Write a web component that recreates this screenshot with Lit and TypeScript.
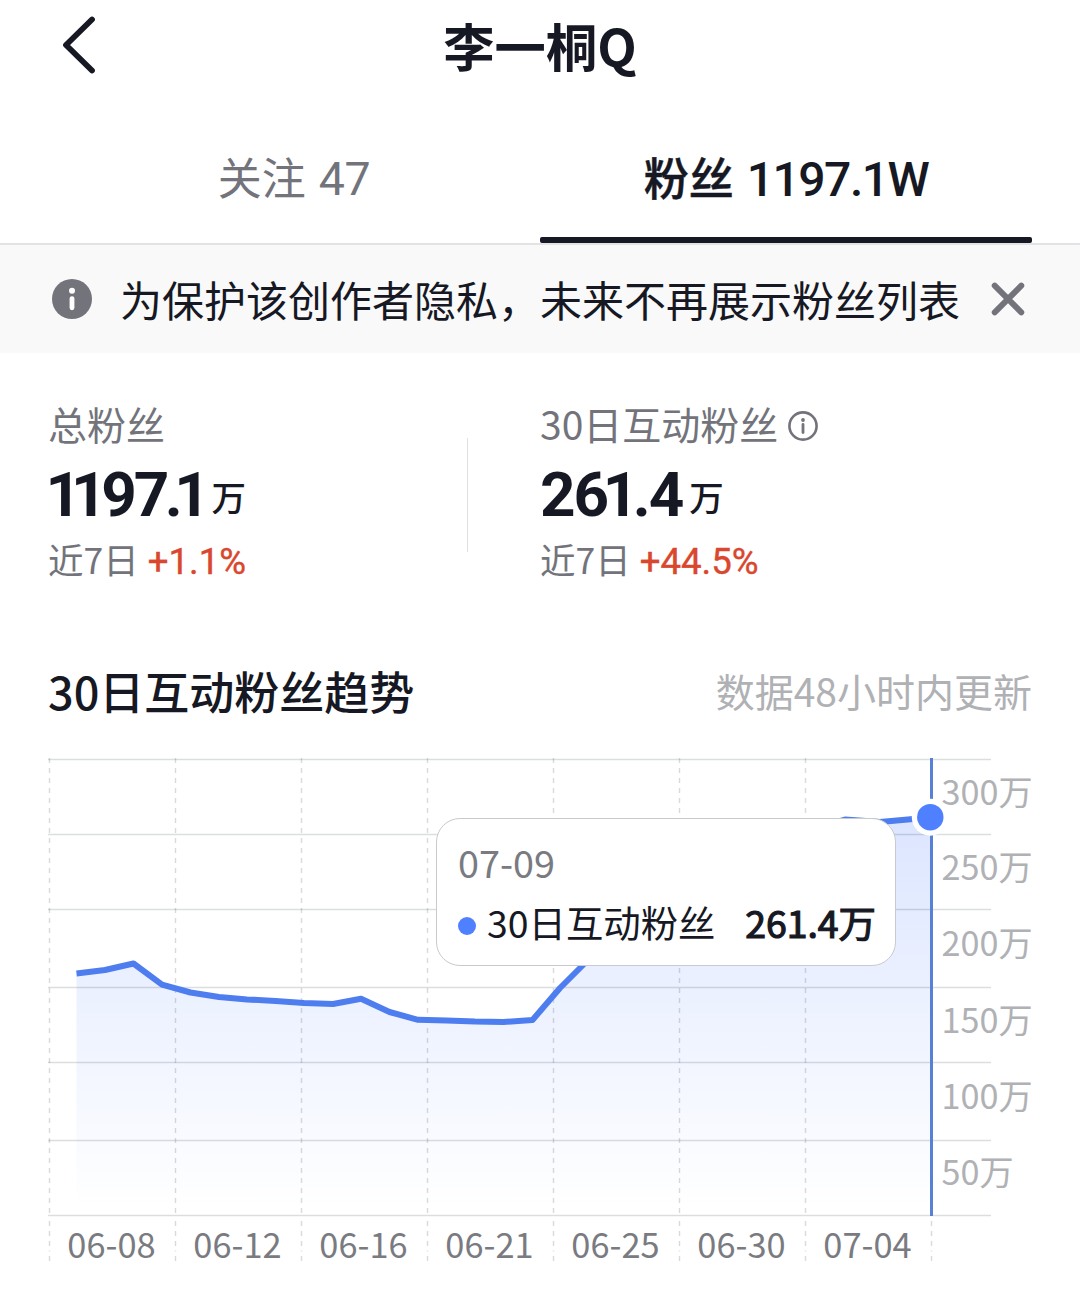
import { LitElement, html, svg, css } from "lit";
import { customElement, property } from "lit/decorators.js";
import { classMap } from "lit/directives/class-map.js";
import { styleMap } from "lit/directives/style-map.js";

interface Stat {
  label: string;
  value: string;
  delta: string;
  info: boolean;
}

const STATS: Stat[] = [
  { label: "总粉丝", value: "1197.1", delta: "+1.1%", info: false },
  { label: "30日互动粉丝", value: "261.4", delta: "+44.5%", info: true },
];

// Proportional spacing after a digit, since the font's figures are tabular.
const spacingAfter = (c: string, next?: string) => {
  let s = next === undefined ? 0 : -2;
  if (c === "1") s -= 3.5;
  if (next === "1") s -= 4.5;
  if (c === "7" && next === ".") s -= 2.5;
  if (c === "." && next === "1") s -= 2;
  if (c === "9") s -= 1;
  return s;
};

const figures = (text: string) =>
  [...text].map(
    (c, i, all) =>
      html`<span
        class=${classMap({ digit: true, lead: i === 0 && c === "1" })}
        style=${styleMap({ letterSpacing: `${spacingAfter(c, all[i + 1])}px` })}
        >${c}</span
      >`,
  );

@customElement("fans-header")
export class FansHeader extends LitElement {
  static styles = css`
    :host {
      display: block;
    }
    .bar {
      display: grid;
      grid-template-columns: 48px 1fr 48px;
      align-items: center;
      height: 90px;
      padding: 0 48px;
    }
    .back {
      display: block;
      width: 64px;
      height: 64px;
    }
    .title {
      margin: 0 0 1px;
      text-align: center;
      font-size: 51.3px;
      line-height: 72px;
      font-weight: 700;
    }
    .tabs {
      display: grid;
      grid-template-columns: 1fr 1fr;
      height: 153px;
      padding: 0 48px;
      border-bottom: 2px solid #e3e3e5;
    }
    .tab {
      display: flex;
      flex-direction: column;
      align-items: center;
      padding-top: 50px;
    }
    .tab-text {
      display: flex;
      align-items: baseline;
      gap: 13px;
      height: 97px;
      line-height: 73px;
      font-size: 44px;
      color: #73747b;
    }
    .num {
      font-family: "Roboto", "Noto Sans CJK SC", sans-serif;
      font-size: 46.5px;
      letter-spacing: -0.5px;
    }
    .active .tab-text {
      color: #161823;
      font-size: 45px;
      font-weight: 500;
    }
    .active .name {
      -webkit-text-stroke: 0.5px #161823;
    }
    .active .num {
      font-size: 48px;
      font-weight: 500;
      letter-spacing: -1.5px;
    }
    .active .line {
      align-self: stretch;
      height: 6px;
      border-radius: 2px;
      background: #161823;
    }
  `;

  render() {
    return html`
      <header class="bar">
        <svg class="back" viewBox="0 0 64 64" fill="none">
          <path d="M44 6.5 L18 32 L44 57.5" stroke="#161823" stroke-width="5.8" stroke-linecap="round" stroke-linejoin="round" />
        </svg>
        <h1 class="title">李一桐Q</h1>
      </header>
      <nav class="tabs">
        <div class="tab">
          <div class="tab-text"><span class="name">关注</span><span class="num">47</span></div>
        </div>
        <div class="tab active">
          <div class="tab-text"><span class="name">粉丝</span><span class="num">1197.1W</span></div>
          <div class="line"></div>
        </div>
      </nav>
    `;
  }
}

@customElement("privacy-banner")
export class PrivacyBanner extends LitElement {
  static styles = css`
    :host {
      display: block;
    }
    .banner {
      display: flex;
      align-items: center;
      height: 108px;
      padding: 0 52px;
      background: #f9f9f9;
    }
    .info {
      width: 40px;
      height: 40px;
      flex: none;
    }
    .text {
      flex: 1;
      margin-left: 28px;
      font-size: 42px;
      line-height: 60px;
      white-space: nowrap;
    }
    .close {
      width: 40px;
      height: 40px;
      flex: none;
    }
  `;

  render() {
    return html`
      <div class="banner">
        <svg class="info" viewBox="0 0 40 40">
          <circle cx="20" cy="20" r="20" fill="#73747b" />
          <circle cx="20" cy="11.8" r="3" fill="#fff" />
          <rect x="17.6" y="17.2" width="4.8" height="14" rx="2.4" fill="#fff" />
        </svg>
        <span class="text">为保护该创作者隐私，未来不再展示粉丝列表</span>
        <svg class="close" viewBox="0 0 40 40" fill="none">
          <path d="M6.7 6.7 L33.3 33.3 M33.3 6.7 L6.7 33.3" stroke="#73747b" stroke-width="5.9" stroke-linecap="round" />
        </svg>
      </div>
    `;
  }
}

@customElement("fans-stat")
export class FansStat extends LitElement {
  static styles = css`
    :host {
      display: block;
    }
    .label {
      display: flex;
      align-items: center;
      gap: 9px;
      height: 60px;
      font-size: 39px;
      line-height: 60px;
      color: #73747b;
    }
    .icon {
      width: 32px;
      height: 32px;
      margin-top: 6px;
    }
    .value {
      display: flex;
      gap: 5px;
      height: 80px;
      line-height: 84px;
    }
    .num {
      display: flex;
      font-family: "Roboto", "Noto Sans CJK SC", sans-serif;
      font-size: 62px;
      font-weight: 700;
    }
    .lead {
      margin-left: -2.5px;
    }
    .unit {
      font-size: 34.5px;
      font-weight: 500;
      line-height: 87px;
    }
    .trend {
      display: flex;
      align-items: baseline;
      gap: 9px;
      height: 52px;
      font-size: 35.5px;
      line-height: 52px;
      color: #73747b;
    }
    .delta {
      font-family: "Roboto", "Noto Sans CJK SC", sans-serif;
      font-size: 36.6px;
      color: #d9472f;
      -webkit-text-stroke: 0.4px #d9472f;
    }
  `;

  @property({ attribute: false }) stat!: Stat;

  render() {
    const s = this.stat;
    return html`
      <div class="label">
        <span>${s.label}</span>
        ${s.info
          ? html`<svg class="icon" viewBox="0 0 32 32" fill="none">
              <circle cx="16" cy="16" r="13.6" stroke="#73747b" stroke-width="2.6" />
              <circle cx="16" cy="10" r="1.9" fill="#73747b" />
              <path d="M16 14.4 V22.6" stroke="#73747b" stroke-width="2.8" stroke-linecap="round" />
            </svg>`
          : null}
      </div>
      <div class="value"><span class="num">${figures(s.value)}</span><span class="unit">万</span></div>
      <div class="trend"><span>近7日</span><span class="delta">${s.delta}</span></div>
    `;
  }
}

const TOP = 758;
const GRID_Y = [759.5, 834.5, 909.5, 987.5, 1062.5, 1140.5, 1215.5];
const GRID_X = [49.5, 175.5, 301.5, 427.5, 553.5, 679.5, 805.5, 931.5];
const DATES = ["06-08", "06-12", "06-16", "06-21", "06-25", "06-30", "07-04"];
const AXIS: [string, number][] = [
  ["300万", 804.5],
  ["250万", 880],
  ["200万", 955.5],
  ["150万", 1032.5],
  ["100万", 1108.5],
  ["50万", 1184.5],
];
const POINTS: [number, number][] = [
  [76.5, 973.5], [105, 970], [133.5, 963.5], [162, 984.7], [190.5, 992.5],
  [219, 997], [247, 999.4], [275.5, 1000.9], [304, 1003], [333, 1004],
  [361, 998.7], [389.5, 1012], [418, 1019.8], [446.5, 1020.4], [475, 1021.6],
  [503.5, 1022], [532.5, 1020], [560, 988], [588, 960], [617, 934],
  [645, 910], [674, 888], [702, 868], [731, 851], [759, 842],
  [788, 836], [816, 828], [845, 819.6], [880, 822], [930, 817.5],
];

@customElement("trend-chart")
export class TrendChart extends LitElement {
  static styles = css`
    :host {
      display: block;
      position: relative;
    }
    .plot {
      display: block;
      width: 1080px;
      height: 558px;
    }
    .grid {
      stroke: #161823;
      stroke-opacity: 0.15;
      stroke-width: 1.4;
    }
    .dash {
      stroke: #161823;
      stroke-opacity: 0.16;
      stroke-width: 1.4;
      stroke-dasharray: 5 5;
    }
    .dash.foot {
      stroke-dasharray: 5 5 5 5 5 4.5 1 4.5 5 9;
    }
    .line {
      fill: none;
      stroke: #4e7df0;
      stroke-width: 6;
      stroke-linejoin: round;
    }
    .axis {
      font-size: 34.2px;
      fill: #b0b1b5;
    }
    .date {
      font-size: 34.4px;
      fill: #7a7b81;
      text-anchor: middle;
    }
    .tip {
      position: absolute;
      left: 436px;
      top: 60px;
      box-sizing: border-box;
      width: 460px;
      height: 148px;
      padding: 13px 19px 0 21px;
      border: 1.5px solid #c9cacd;
      border-radius: 24px;
      background: #fff;
    }
    .tip-date {
      font-size: 37.8px;
      line-height: 60px;
      color: #7a7b81;
    }
    .tip-row {
      display: flex;
      align-items: center;
      line-height: 61px;
      font-size: 37.4px;
      white-space: nowrap;
    }
    .dot {
      width: 18px;
      height: 18px;
      margin: 7px 11px 0 0;
      border-radius: 50%;
      background: #4f80ff;
    }
    .tip-value {
      margin-left: auto;
      -webkit-text-stroke: 1.2px #161823;
    }
  `;

  render() {
    const path = POINTS.map(([x, y]) => `${x} ${y - TOP}`).join(" L");
    return html`
      <svg class="plot" viewBox="0 0 1080 558">
        <defs>
          <linearGradient id="fade" x1="0" y1="60" x2="0" y2="450" gradientUnits="userSpaceOnUse">
            <stop offset="0" stop-color="#4f80ff" stop-opacity="0.2" />
            <stop offset="1" stop-color="#4f80ff" stop-opacity="0" />
          </linearGradient>
        </defs>
        <path d="M${path} L930 457 L76.5 457 Z" fill="url(#fade)" />
        ${GRID_Y.map((y) => svg`<line class="grid" x1="48" x2="991" y1=${y - TOP} y2=${y - TOP} />`)}
        ${GRID_X.map(
          (x) => svg`
            <line class="dash" x1=${x} x2=${x} y1="0" y2="457" />
            <line class="dash foot" x1=${x} x2=${x} y1="463" y2="503" />`,
        )}
        <path class="line" d="M${path}" />
        <line x1="931.5" x2="931.5" y1="0" y2="458" stroke="#5880d6" stroke-width="3" />
        <circle cx="930.3" cy="59.2" r="18.5" fill="#fff" />
        <circle cx="930.3" cy="59.2" r="13.2" fill="#4f80ff" />
        ${AXIS.map(([t, y]) => svg`<text class="axis" x="941.6" y=${y - TOP}>${t}</text>`)}
        ${DATES.map((t, i) => svg`<text class="date" x=${111.5 + i * 126} y="500">${t}</text>`)}
      </svg>
      <div class="tip">
        <div class="tip-date">07-09</div>
        <div class="tip-row">
          <span class="dot"></span>
          <span>30日互动粉丝</span>
          <span class="tip-value">261.4万</span>
        </div>
      </div>
    `;
  }
}

@customElement("app-root")
export class AppRoot extends LitElement {
  static styles = css`
    :host {
      display: block;
      width: 1080px;
      height: 1316px;
      overflow: hidden;
      background: #fff;
      color: #161823;
      font-family: "Noto Sans CJK SC", "Liberation Sans", sans-serif;
    }
    .stats {
      display: grid;
      grid-template-columns: 419px 1px 1fr;
      height: 262px;
      padding: 40px 48px 0;
      box-sizing: border-box;
    }
    .divider {
      width: 1px;
      height: 114px;
      margin-top: 45px;
      background: #dfdfe1;
    }
    .second {
      padding-left: 72px;
    }
    .heading {
      display: flex;
      justify-content: space-between;
      align-items: flex-start;
      height: 143px;
      padding: 45px 48px 0;
      box-sizing: border-box;
    }
    .name {
      margin: 0;
      font-size: 45px;
      line-height: 61px;
      font-weight: 500;
    }
    .note {
      font-size: 39px;
      line-height: 60px;
      color: #b0b1b5;
    }
  `;

  render() {
    return html`
      <fans-header></fans-header>
      <privacy-banner></privacy-banner>
      <section class="stats">
        <fans-stat .stat=${STATS[0]}></fans-stat>
        <div class="divider"></div>
        <fans-stat class="second" .stat=${STATS[1]}></fans-stat>
      </section>
      <section class="heading">
        <h2 class="name">30日互动粉丝趋势</h2>
        <span class="note">数据48小时内更新</span>
      </section>
      <trend-chart></trend-chart>
    `;
  }
}
